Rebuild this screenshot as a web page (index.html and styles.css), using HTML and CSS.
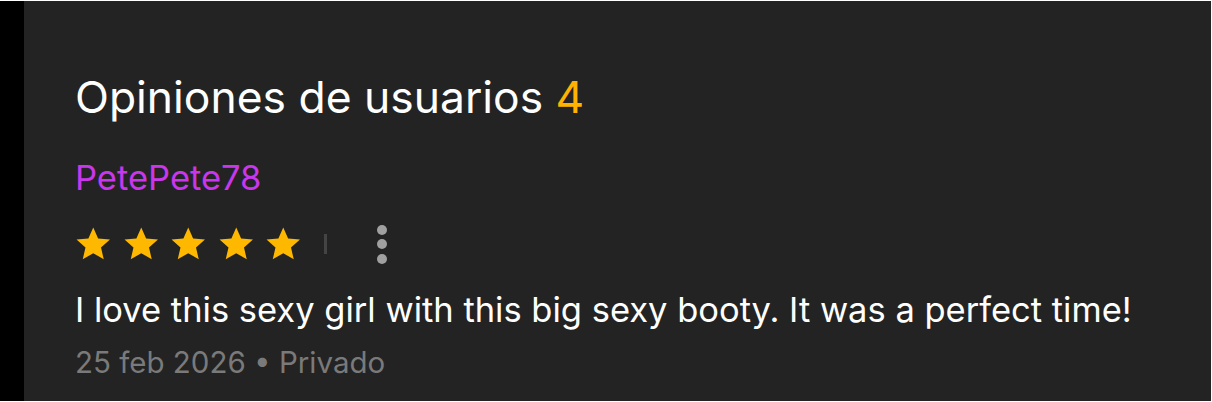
FILE: index.html
```html
<!DOCTYPE html>
<html>
<head>
<meta charset="utf-8">
<title>Opiniones de usuarios</title>
<link rel="stylesheet" href="styles.css">
</head>
<body>

<div class="page">
	<div class="side"></div>
	<section class="reviews">
		<h2 class="reviews-title">Opiniones de usuarios <span class="count">4</span></h2>

		<div class="review">
			<div class="author">PetePete78</div>
			<div class="rating-row">
				<div class="stars">
					<svg class="star" viewBox="0 0 24 24"><path d="M12 1l3.2 7.2 7.8.7-5.9 5.2 1.8 7.8L12 17.9 5.1 21.9l1.8-7.8L1 8.9l7.8-.7z"/></svg>
					<svg class="star" viewBox="0 0 24 24"><path d="M12 1l3.2 7.2 7.8.7-5.9 5.2 1.8 7.8L12 17.9 5.1 21.9l1.8-7.8L1 8.9l7.8-.7z"/></svg>
					<svg class="star" viewBox="0 0 24 24"><path d="M12 1l3.2 7.2 7.8.7-5.9 5.2 1.8 7.8L12 17.9 5.1 21.9l1.8-7.8L1 8.9l7.8-.7z"/></svg>
					<svg class="star" viewBox="0 0 24 24"><path d="M12 1l3.2 7.2 7.8.7-5.9 5.2 1.8 7.8L12 17.9 5.1 21.9l1.8-7.8L1 8.9l7.8-.7z"/></svg>
					<svg class="star" viewBox="0 0 24 24"><path d="M12 1l3.2 7.2 7.8.7-5.9 5.2 1.8 7.8L12 17.9 5.1 21.9l1.8-7.8L1 8.9l7.8-.7z"/></svg>
				</div>
				<span class="divider"></span>
				<button class="more" type="button" aria-label="Más opciones">
					<span class="dot"></span>
					<span class="dot"></span>
					<span class="dot"></span>
				</button>
			</div>
			<p class="review-text">I love this sexy girl with this big sexy booty. It was a perfect time!</p>
			<div class="meta">25 feb 2026 • Privado</div>
		</div>
	</section>
</div>

</body>
</html>
```

FILE: styles.css
```css
* {
	margin: 0;
	padding: 0;
	box-sizing: border-box;
}
html, body {
	height: 100%;
}
body {
	background: #fff;
	font-family: Inter, "Noto Sans", sans-serif;
}
.page {
	display: flex;
	height: calc(100% - 2px);
	margin: 1px 1px 1px 0;
	background: #232323;
}
.side {
	width: 24px;
	background: #000;
}
.reviews {
	flex: 1;
	padding: 70px 0 0 51px;
}
.reviews-title {
	font-size: 44.4px;
	font-weight: 400;
	line-height: 53px;
	color: #fff;
}
.count {
	color: #ffb300;
}
.author {
	margin-top: 33px;
	font-size: 34.5px;
	line-height: 42px;
	color: #c837ec;
}
.rating-row {
	display: flex;
	align-items: center;
	margin-top: 23px;
	height: 44px;
}
.stars {
	display: flex;
	gap: 11px;
}
.star {
	width: 36.5px;
	height: 36.5px;
	fill: #ffb800;
}
.divider {
	width: 3px;
	height: 20px;
	margin: 0 50px 0 22px;
	background: #444;
}
.more {
	display: flex;
	flex-direction: column;
	gap: 4.5px;
	border: 0;
	background: none;
}
.dot {
	width: 10px;
	height: 10px;
	border-radius: 50%;
	background: #a0a0a0;
}
.review-text {
	margin-top: 23px;
	font-size: 34.5px;
	line-height: 42px;
	color: #fff;
}
.meta {
	margin-top: 13px;
	font-size: 29.5px;
	line-height: 36px;
	color: #7a7a7a;
}
```
